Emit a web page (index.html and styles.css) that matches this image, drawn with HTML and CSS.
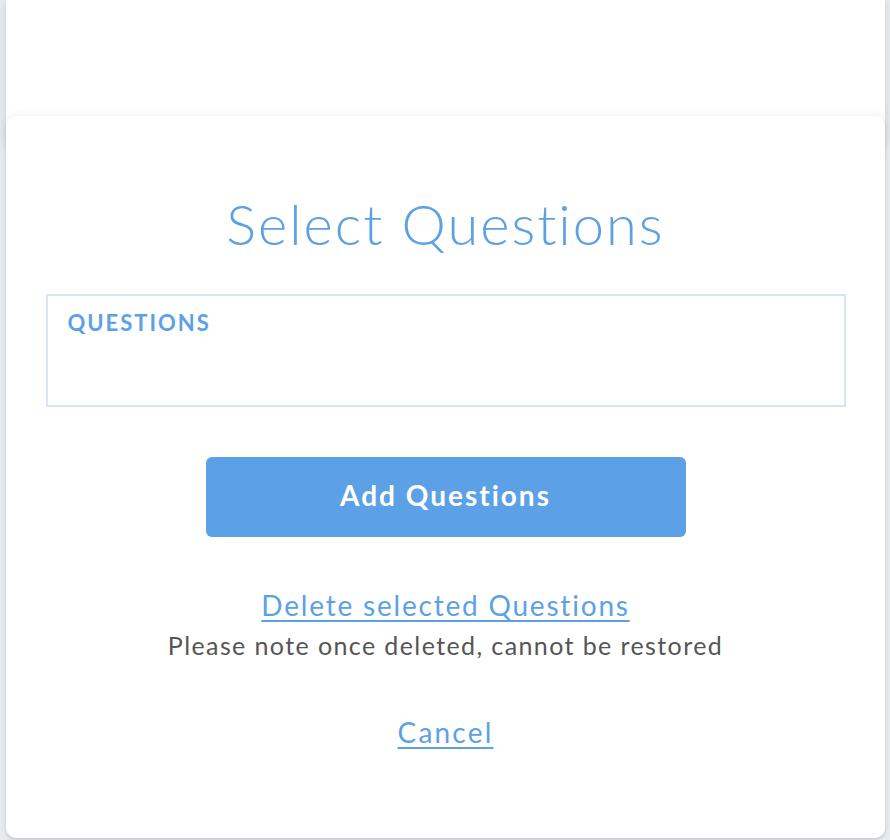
FILE: index.html
```html
<!DOCTYPE html>
<html lang="en">
<head>
    <meta charset="UTF-8">
    <meta name="viewport" content="width=device-width, initial-scale=1.0">
    <title>Select Questions</title>
    <link rel="stylesheet" href="styles.css">
</head>
<body>

    <div class="page">
        <div class="back-card"></div>

        <div class="modal">
            <h2 class="title">Select Questions</h2>

            <div class="questions-box">
                <div class="box-label">QUESTIONS</div>
            </div>

            <button class="btn add">Add Questions</button>

            <a href="#" class="link delete">Delete selected Questions</a>
            <p class="note">Please note once deleted, cannot be restored</p>

            <a href="#" class="link cancel">Cancel</a>
        </div>
    </div>

</body>
</html>
```

FILE: styles.css
```css
/* General Styles */
body {
    margin: 0;
    font-family: 'Lato', 'Open Sans', sans-serif;
    background: #e8edf2;
}

.page {
    width: 890px;
    height: 840px;
    overflow: hidden;
}

.back-card {
    margin: 0 5px 0 6px;
    height: 150px;
    background: #fff;
    border-radius: 0 0 10px 10px;
    box-shadow: 0 0 12px rgba(0, 0, 0, 0.12);
}

.modal {
    margin: -34px 5px 0 6px;
    height: 722px;
    background: #fff;
    border-radius: 10px;
    box-shadow: 0 0 10px rgba(0, 0, 0, 0.08), 0 2px 3px rgba(0, 0, 0, 0.1);
    display: flex;
    flex-direction: column;
    align-items: center;
    position: relative;
}

.title {
    margin: 73px 0 0;
    font-size: 56px;
    font-weight: 300;
    letter-spacing: 2px;
    color: #5ca1e6;
    line-height: 70px;
}

.questions-box {
    box-sizing: border-box;
    width: 800px;
    height: 113px;
    margin-top: 35px;
    border: 2px solid #d6e6f5;
    padding: 14px 20px;
}

.box-label {
    font-size: 22px;
    font-weight: 700;
    letter-spacing: 2px;
    color: #5ca1e6;
    line-height: 26px;
}

.btn {
    width: 480px;
    height: 80px;
    margin-top: 50px;
    padding: 0 0 4px;
    border: none;
    border-radius: 6px;
    font-family: inherit;
    font-size: 28px;
    font-weight: 700;
    letter-spacing: 2px;
    color: #fff;
    background: #5ca1e6;
    cursor: pointer;
}

.link {
    color: #5ca1e6;
    font-size: 28px;
    line-height: 36px;
    text-decoration: underline;
    text-underline-offset: 4px;
    text-decoration-thickness: 2px;
}

.delete {
    margin-top: 50px;
    letter-spacing: 1.8px;
}

.note {
    margin: 7px 0 0;
    font-size: 25px;
    line-height: 30px;
    letter-spacing: 1.4px;
    color: #555;
}

.cancel {
    margin-top: 54px;
    letter-spacing: 2.2px;
}
```
